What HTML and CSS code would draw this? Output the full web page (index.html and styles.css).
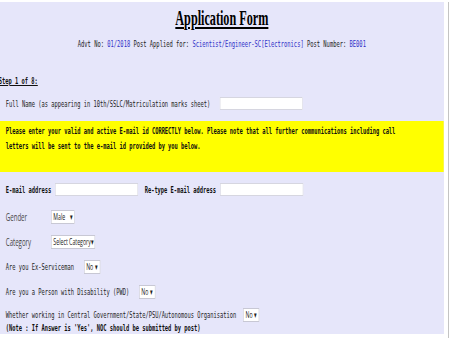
FILE: index.html
```html
<!DOCTYPE html>
<html lang="en">
<head>
    <meta charset="UTF-8">
    <title>Application Form</title>
    <link rel="stylesheet" href="styles.css">
</head>
<body>
    <div class="frame">
        <div class="sheet">
            <form class="form">
                <h1 class="title">Application Form</h1>
                <p class="advt">Advt No: <span class="val">01/2018</span> Post Applied for: <span class="val">Scientist/Engineer-SC[Electronics]</span> Post Number: <span class="val">BE001</span></p>
                <p class="step">Step 1 of 8:</p>

                <div class="row row-name">
                    <label>Full Name (as appearing in 10th/SSLC/Matriculation marks sheet)</label>
                    <input class="field" type="text">
                </div>

                <div class="notice">
                    Please enter your valid and active E-mail id CORRECTLY below. Please note that all further communications including call letters will be sent to the e-mail id provided by you below.
                </div>

                <div class="row row-email">
                    <label class="strong">E-mail address</label>
                    <input class="field" type="text">
                    <label class="strong retype">Re-type E-mail address</label>
                    <input class="field" type="text">
                </div>

                <div class="row row-pick">
                    <label class="soft">Gender</label>
                    <span class="pick pick-gender">Male</span>
                </div>
                <div class="row row-pick">
                    <label class="soft">Category</label>
                    <span class="pick pick-cat">Select Category</span>
                </div>
                <div class="row row-pick">
                    <label>Are you Ex-Serviceman</label>
                    <span class="pick pick-no">No</span>
                </div>
                <div class="row row-pick">
                    <label>Are you a Person with Disability (PWD)</label>
                    <span class="pick pick-no">No</span>
                </div>
                <div class="row row-govt">
                    <label>Whether working in Central Government/State/PSU/Autonomous Organisation</label>
                    <span class="pick pick-no">No</span>
                </div>
                <p class="note">(Note : If Answer is 'Yes', NOC should be submitted by post)</p>
            </form>
        </div>
        <div class="rail"></div>
    </div>
</body>
</html>
```

FILE: styles.css
```css
body {
    margin: 0;
    padding: 2px 0 0 0;
    background: #fff;
    color: #222;
    font-family: "DejaVu Sans Mono", "Liberation Mono", monospace;
    font-size: 9.3px;
}

.frame {
    display: flex;
    height: 336px;
}

.sheet {
    width: 444px;
    background: #e6e6fa;
    overflow: hidden;
    align-self: flex-start;
}

.rail {
    margin-left: 4px;
    width: 1px;
    background: #c4c4c4;
}

/* the page is drawn wide, then squeezed sideways like the capture */
.form {
    width: 765px;
    transform: scaleX(0.58);
    transform-origin: 0 0;
}

.title {
    margin: 4px 0 0 0;
    height: 24px;
    line-height: 24px;
    text-align: center;
    font-family: "Liberation Serif", serif;
    font-size: 21px;
    font-weight: bold;
    color: #000;
    text-decoration: underline;
}

.advt {
    margin: 7px 0 0 0;
    line-height: 14px;
    text-align: center;
    font-size: 9.4px;
    color: #222;
}

.val {
    color: #3030c8;
}

.step {
    margin: 23px 0 0 -2px;
    line-height: 14px;
    font-weight: bold;
    color: #111;
    text-decoration: underline;
}

.row {
    display: flex;
    align-items: center;
    padding-left: 10px;
    white-space: nowrap;
}

.field {
    width: 143px;
    height: 13px;
    box-sizing: border-box;
    margin: 0;
    padding: 0;
    background: #fff;
    border: 1px solid #d6d6e0;
}

.row-name {
    margin-top: 7px;
    height: 16px;
}

.row-name .field {
    margin-left: 16px;
}

.notice {
    margin-top: 10px;
    padding: 3px 70px 19px 10px;
    background: #ffff00;
    line-height: 14.5px;
    font-weight: bold;
    color: #111;
}

.row-email {
    margin-top: 9px;
    height: 16px;
}

.strong {
    font-weight: bold;
    color: #111;
}

.row-email .field {
    margin-left: 7px;
}

.retype {
    margin-left: 11px;
}

.row-pick {
    height: 25px;
    gap: 17px;
}

.row-email + .row-pick {
    margin-top: 7px;
}

.soft {
    width: 61px;
    font-family: "Open Sans", sans-serif;
    font-size: 10.5px;
    color: #444;
}

.pick {
    display: inline-flex;
    align-items: center;
    height: 14px;
    box-sizing: border-box;
    padding: 0 3px;
    background: #fff;
    border: 1px solid #c8c8d4;
    font-family: "Open Sans", sans-serif;
    font-size: 9px;
    color: #222;
}

.pick::after {
    content: "\25BE";
    margin-left: auto;
    font-size: 9px;
}

.pick-gender {
    width: 41px;
}

.pick-cat {
    width: 76px;
}

.pick-no {
    width: 28px;
}

.row-govt {
    margin-top: 4px;
    height: 13px;
    gap: 12px;
}

.note {
    margin: 0;
    padding-left: 10px;
    line-height: 13px;
    font-weight: bold;
    color: #111;
}
```
